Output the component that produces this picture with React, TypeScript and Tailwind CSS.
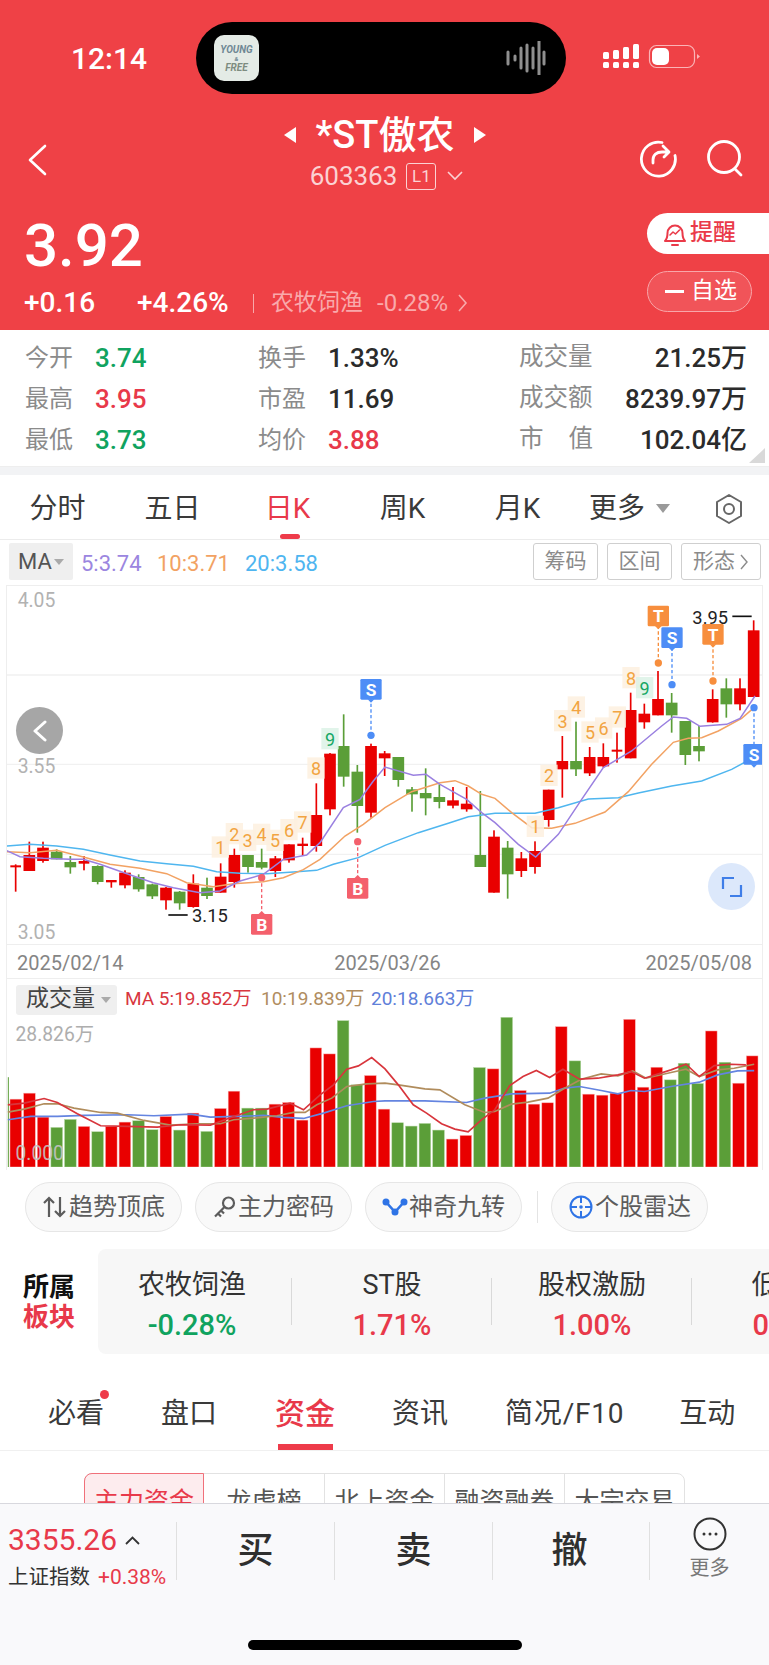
import React from "react";

// [wickTop, bodyTop, bodyBottom, wickBottom, green?]
const candles: [number, number, number, number, number][] = [
  [850, 853, 859, 932, 0], [782, 822, 870, 870, 0], [782, 800, 840, 845, 0], [805, 812, 835, 835, 1],
  [825, 843, 859, 878, 1], [825, 840, 848, 868, 0], [853, 855, 903, 910, 1], [897, 897, 904, 920, 0],
  [868, 875, 913, 922, 0], [880, 888, 925, 932, 1], [908, 910, 946, 954, 1], [918, 920, 958, 986, 0],
  [930, 932, 967, 986, 1], [880, 908, 978, 980, 0], [890, 920, 945, 954, 1], [847, 887, 935, 935, 0],
  [803, 822, 903, 920, 0], [822, 822, 858, 875, 1], [803, 843, 860, 865, 1], [825, 832, 870, 888, 0],
  [790, 790, 838, 845, 0], [770, 788, 795, 825, 0], [607, 702, 795, 812, 0], [516, 518, 685, 703, 0],
  [400, 495, 587, 617, 1], [552, 572, 675, 755, 1], [488, 495, 695, 710, 0], [510, 517, 532, 585, 0],
  [528, 528, 597, 617, 1], [618, 625, 640, 692, 1], [562, 636, 652, 703, 1], [610, 648, 663, 682, 1],
  [618, 658, 674, 682, 0], [618, 668, 685, 692, 0], [630, 822, 858, 858, 1], [748, 767, 935, 935, 0],
  [780, 800, 880, 953, 1], [813, 832, 870, 888, 0], [781, 810, 858, 878, 0], [626, 626, 717, 737, 0],
  [465, 540, 565, 650, 0], [422, 540, 565, 585, 1], [498, 528, 577, 585, 0], [487, 528, 556, 560, 0],
  [455, 506, 512, 545, 0], [335, 387, 532, 532, 0], [368, 398, 424, 443, 0], [270, 354, 403, 403, 0],
  [336, 365, 403, 455, 1], [420, 420, 522, 552, 1], [435, 495, 511, 541, 1], [325, 354, 424, 425, 0],
  [292, 322, 370, 410, 1], [292, 322, 370, 388, 0], [118, 148, 348, 348, 0],
];

const maPurple = "18,808 60,827 130,832 210,835 250,835 300,850 400,885 460,905 520,920 600,935 660,930 720,900 790,880 850,835 920,822 960,785 1030,680 1080,655 1120,600 1155,558 1240,583 1278,580 1320,610 1400,655 1445,695 1485,725 1555,790 1607,828 1675,760 1745,655 1810,560 1895,510 1985,435 2020,408 2060,412 2100,436 2180,430 2220,412 2265,345";
const maOrange = "18,812 90,815 170,808 250,828 330,850 420,862 500,878 560,905 640,917 700,908 790,902 850,890 910,866 960,835 1035,765 1090,730 1155,680 1235,632 1320,605 1365,599 1405,615 1445,640 1485,652 1535,695 1595,740 1655,742 1725,727 1815,693 1885,632 1955,550 2020,484 2065,472 2105,470 2155,450 2225,412 2262,380";
const maBlue = "18,795 90,790 170,795 250,805 330,822 420,840 500,848 580,856 650,872 720,877 800,878 880,873 950,868 1000,850 1075,830 1155,793 1255,755 1345,727 1405,707 1485,697 1605,697 1675,680 1765,654 1855,650 1915,636 2015,615 2105,600 2195,565 2260,530";

const vols: [number, number][] = [
  [388, 0], [370, 0], [442, 0], [473, 1], [449, 1], [470, 0], [486, 1], [470, 0], [457, 0], [453, 1], [480, 1],
  [440, 0], [481, 1], [430, 0], [485, 1], [416, 0], [364, 0], [415, 1], [415, 1], [403, 0], [398, 0], [451, 0],
  [234, 0], [252, 0], [152, 1], [345, 1], [317, 0], [418, 0], [459, 1], [469, 1], [461, 1], [481, 1], [508, 0],
  [497, 0], [293, 1], [297, 0], [142, 1], [362, 0], [403, 0], [399, 0], [170, 0], [273, 1], [373, 0], [376, 0],
  [370, 0], [148, 0], [352, 0], [292, 0], [330, 1], [280, 1], [341, 1], [183, 0], [277, 1], [340, 0], [258, 0],
];
const volRed = "21,405 70,400 130,386 170,398 230,432 300,468 380,470 470,472 540,465 630,466 700,440 760,420 800,418 870,400 910,420 960,375 1000,345 1040,298 1075,288 1115,263 1155,297 1195,345 1240,405 1280,430 1325,462 1365,478 1405,486 1445,450 1485,420 1530,347 1570,320 1610,302 1650,323 1690,298 1740,328 1795,325 1855,315 1895,305 1935,325 2015,300 2060,283 2100,320 2145,287 2195,283 2240,285";
const volTan = "21,427 70,418 130,402 170,402 220,415 300,428 350,430 430,452 510,466 590,462 660,462 700,450 760,445 830,438 880,428 915,428 950,405 995,385 1040,350 1100,342 1155,340 1195,345 1275,357 1320,360 1395,405 1455,428 1485,425 1535,403 1585,397 1645,385 1695,355 1745,328 1805,312 1855,318 1900,303 1940,325 2015,308 2060,298 2100,320 2155,300 2205,295 2265,283";
const volBlue = "21,450 90,440 170,440 250,437 380,435 460,438 570,433 630,442 710,440 790,437 850,443 910,446 970,430 1040,408 1120,395 1155,393 1275,393 1400,398 1455,385 1535,372 1650,370 1695,355 1740,350 1805,362 1855,372 1895,362 1935,365 2015,350 2100,337 2155,315 2215,303 2265,302";

const counts: [string, number, number][] = [
  ["1", 661, 800], ["2", 703, 760], ["3", 743, 780], ["4", 785, 762], ["5", 825, 780], ["6", 867, 748], ["7", 908, 725], ["8", 948, 563], ["9", 990, 475],
  ["1", 1606, 738], ["2", 1647, 585], ["3", 1688, 421], ["4", 1729, 380], ["5", 1770, 455], ["6", 1811, 443], ["7", 1852, 410], ["8", 1893, 292], ["9", 1934, 322],
];

// letter, x, tag centre y, dot y, colour; tag sits above the dot unless it is a B
const marks: [string, number, number, number, string][] = [
  ["S", 1113, 325, 463, "#4d8df6"],
  ["B", 1073, 922, 782, "#f4606c"],
  ["B", 785, 1030, 890, "#f4606c"],
  ["T", 1975, 105, 246, "#f78e3d"],
  ["S", 2016, 170, 311, "#4d8df6"],
  ["T", 2139, 160, 300, "#f78e3d"],
  ["S", 2262, 520, 380, "#4d8df6"],
];

const PriceChart = () => (
  <svg viewBox="21 15 2265 1074" className="block w-[755px] h-[358px]">
    {[282, 550, 820].map((y) => (
      <line key={y} x1="21" x2="2286" y1={y} y2={y} stroke="#f1f1f1" strokeWidth="4" />
    ))}
    {candles.map(([wt, bt, bb, wb, g], i) => {
      const x = 47 + 41 * i;
      const c = g ? "#5b9e38" : "#e90000";
      const thin = bb - bt < 10;
      return (
        <g key={i}>
          <rect x={x - 2.5} y={wt} width="5" height={wb - wt} fill={c} />
          <rect x={x - (thin ? 16 : 17.5)} y={bt} width={thin ? 32 : 35} height={bb - bt} fill={c} />
        </g>
      );
    })}
    <polyline points={maBlue} fill="none" stroke="#4fb6ef" strokeWidth="4.5" />
    <polyline points={maOrange} fill="none" stroke="#f2a263" strokeWidth="4.5" />
    <polyline points={maPurple} fill="none" stroke="#9a80e0" strokeWidth="4.5" />
    {counts.map(([n, x, y], i) => (
      <g key={i}>
        <rect x={x - 26} y={y - 34} width="52" height="64" fill={n === "9" ? "#dcf2e6" : "#fdf0df"} opacity="0.85" />
        <text x={x} y={y + 19} textAnchor="middle" fontSize="54" fill={n === "9" ? "#16a765" : "#f2a441"}>{n}</text>
      </g>
    ))}
    {marks.map(([l, x, y, dot, c], i) => {
      const below = l === "B";
      return (
        <g key={i}>
          <line x1={x} x2={x} y1={dot} y2={y} stroke={c} strokeWidth="4" strokeDasharray="10 7" />
          <circle cx={x} cy={dot} r="11" fill={c} />
          <rect x={x - 32} y={y - 31} width="64" height="62" rx="4" fill={c} />
          <polygon points={below ? `${x - 10},${y - 30} ${x},${y - 40} ${x + 10},${y - 30}` : `${x - 10},${y + 30} ${x},${y + 40} ${x + 10},${y + 30}`} fill={c} />
          <text x={x} y={y + 19} textAnchor="middle" fontSize="52" fontWeight="700" fill="#fff">{l}</text>
        </g>
      );
    })}
    <line x1="505" x2="563" y1="1002" y2="1002" stroke="#111" strokeWidth="5" />
    <text x="576" y="1022" fontSize="55" fill="#222">3.15</text>
    <text x="2077" y="130" fontSize="55" fill="#222">3.95</text>
    <line x1="2197" x2="2255" y1="106" y2="106" stroke="#111" strokeWidth="5" />
    <text x="53" y="78" fontSize="58" fill="#b2b2b2">4.05</text>
    <text x="53" y="576" fontSize="58" fill="#b2b2b2">3.55</text>
    <text x="53" y="1075" fontSize="58" fill="#b2b2b2">3.05</text>
  </svg>
);

const VolumeChart = () => (
  <svg viewBox="21 141 2265 451" className="block w-[755px] h-[150px]">
    <rect x="21" y="322" width="3" height="270" fill="#5b9e38" />
    {vols.map(([top, g], i) => (
      <rect key={i} x={27.5 + 41 * i} y={top} width="35" height={592 - top} fill={g ? "#5b9e38" : "#e90000"} stroke={g ? "#b5d6a3" : "#f9b0b0"} strokeWidth="1.5" />
    ))}
    <polyline points={volBlue} fill="none" stroke="#6484e0" strokeWidth="5" />
    <polyline points={volTan} fill="none" stroke="#b08c5c" strokeWidth="5" />
    <polyline points={volRed} fill="none" stroke="#d8353c" strokeWidth="5" />
    <text x="44" y="213" fontSize="58" fill="#aeaeae">28.826万</text>
    <text x="44" y="570" fontSize="58" fill="#c4c4c4" opacity="0.9">0.000</text>
  </svg>
);

const Stat = ({ label, value, color, w }: { label: string; value: string; color?: string; w: string }) => (
  <div className="flex items-center h-[41px]">
    <span className={`${w} text-[24px] leading-none text-[#8b8b8b]`}>{label}</span>
    <span className={`text-[26px] leading-none font-medium ${color ?? "text-[#2b2b2b]"}`}>{value}</span>
  </div>
);

const StatRight = ({ label, value }: { label: string; value: string }) => (
  <div className="flex items-center justify-between h-[41px] w-[228px]">
    <span className="w-[74px] flex justify-between text-[24.5px] leading-none text-[#8b8b8b]">
      {label.split(" ").map((t) => <span key={t}>{t}</span>)}
    </span>
    <span className="text-[26px] leading-none font-medium text-[#2b2b2b]">{value}</span>
  </div>
);

const Pill = ({ icon, label }: { icon: React.ReactNode; label: string }) => (
  <div className="w-[157px] h-[50px] shrink-0 flex items-center justify-center gap-[1px] rounded-full border border-[#e6e6e6] bg-[#f9f9f9] text-[24px] text-[#5c5c5c]">
    {icon}
    <span>{label}</span>
  </div>
);

const Sector = ({ name, value, green }: { name: string; value: string; green?: boolean }) => (
  <div className="w-[200px] shrink-0 flex flex-col items-center pt-[2px]">
    <span className="text-[27px] leading-[35px] text-[#333]">{name}</span>
    <span className={`mt-[5px] text-[29px] leading-[35px] font-medium ${green ? "text-[#10a35f]" : "text-[#e8394a]"}`}>{value}</span>
  </div>
);

export default function App() {
  return (
    <div className="w-[769px] h-[1665px] flex flex-col overflow-hidden bg-white font-[Roboto,'Noto_Sans_CJK_SC',sans-serif]">
      {/* Red header */}
      <header className="h-[330px] shrink-0 bg-[#ef4146] text-white">
        <div className="h-[94px] pt-[22px] flex items-start">
          <div className="w-[196px] pl-[71px] pt-[20px] text-[30px] leading-[34px] font-medium">12:14</div>
          <div className="w-[370px] h-[72px] rounded-full bg-black flex items-center justify-between pl-[18px] pr-[20px]">
            <div className="w-[45px] h-[46px] rounded-[10px] bg-[#e4ebe6] flex flex-col items-center justify-center italic font-bold text-[#6f8894] leading-[11px]">
              <span className="text-[10px]">YOUNG</span>
              <span className="text-[6px] leading-[7px]">&amp;</span>
              <span className="text-[10px] text-[#7d8c80]">FREE</span>
            </div>
            <svg width="40" height="34" viewBox="0 0 40 34" stroke="#8f8f8f" strokeWidth="3" strokeLinecap="round">
              <path d="M2 11v12M9 15v4M15 7v20M21 4v26M27 7v20M33 0v34M38 11v12" />
            </svg>
          </div>
          <svg width="134" height="26" viewBox="0 0 134 26" className="ml-[37px] mt-[22px]" fill="#fff">
            <rect x="0" y="18" width="6" height="6" rx="1.5" /><rect x="10" y="18" width="6" height="6" rx="1.5" /><rect x="20" y="18" width="6" height="6" rx="1.5" /><rect x="30" y="18" width="6" height="6" rx="1.5" />
            <rect x="0" y="8" width="6" height="7" rx="1.5" /><rect x="10" y="6" width="6" height="9" rx="1.5" /><rect x="20" y="3" width="6" height="12" rx="1.5" /><rect x="30" y="0" width="6" height="15" rx="1.5" />
            <rect x="46.500" y="1.500" width="45" height="22" rx="7" fill="none" stroke="#fbb4b6" strokeWidth="1.2" />
            <rect x="49" y="4" width="17" height="17" rx="5" />
            <path d="M94 10l3 2.500-3 2.500z" fill="#fbb4b6" />
          </svg>
        </div>

        <div className="h-[102px] flex">
          <div className="w-[282px] pl-[27px] pt-[50px]">
            <svg width="20" height="32" viewBox="0 0 20 32" fill="none" stroke="#fff" strokeWidth="2.6" strokeLinecap="round" strokeLinejoin="round"><path d="M18 2 3 16l15 14" /></svg>
          </div>
          <div className="w-[206px] flex flex-col items-center pt-[20px]">
            <div className="flex items-center">
              <span className="w-0 h-0 border-y-[8px] border-y-transparent border-r-[12px] border-r-white" />
              <span className="mx-[19px] text-[38px] leading-[42px] font-medium whitespace-nowrap">*ST傲农</span>
              <span className="w-0 h-0 border-y-[8px] border-y-transparent border-l-[12px] border-l-white" />
            </div>
            <div className="mt-[6px] pl-[3px] flex items-center text-[#fbd2d3] whitespace-nowrap">
              <span className="text-[26px] leading-[28px]">603363</span>
              <span className="ml-[9px] w-[30px] h-[27px] rounded-[3px] border border-[#fbd2d3] text-[17px] leading-[25px] text-center">L1</span>
              <svg width="16" height="10" viewBox="0 0 16 10" fill="none" stroke="#fbd2d3" strokeWidth="1.6" className="ml-[11px]"><path d="m1 1 7 7 7-7" /></svg>
            </div>
          </div>
          <div className="flex-1 flex items-start pl-[150px] pt-[45px] gap-[29px]">
            <svg width="40" height="40" viewBox="0 0 40 40" fill="none" stroke="#fff" strokeWidth="2.8" strokeLinecap="round" strokeLinejoin="round" className="shrink-0">
              <path d="M24 3.500a17 17 0 1 0 13 13" />
              <path d="M15 24v-3c0-5 3.500-8 9-8h6M25 7l6 6-5 5" />
            </svg>
            <svg width="38" height="40" viewBox="0 0 38 40" fill="none" stroke="#fff" strokeWidth="2.8" strokeLinecap="round" className="shrink-0">
              <circle cx="17" cy="18" r="15.500" />
              <path d="m28 30 6 6" />
            </svg>
          </div>
        </div>

        <div className="flex justify-between">
          <div className="pl-[24px] pt-[20px]">
            <div className="text-[60px] leading-[60px] font-medium">3.92</div>
            <div className="mt-[12px] flex items-center text-[28px] leading-[30px] font-medium">
              <span className="w-[113px]">+0.16</span>
              <span className="w-[116px]">+4.26%</span>
              <span className="w-px h-[19px] bg-[#f8a8aa]" />
              <span className="ml-[17px] text-[23px] font-normal text-[#f9a9ab]">农牧饲渔</span>
              <span className="ml-[14px] text-[24px] font-normal text-[#f9a9ab]">-0.28%</span>
              <svg width="10" height="20" viewBox="0 0 10 20" fill="none" stroke="#f9a9ab" strokeWidth="1.6" className="ml-[10px]"><path d="m1 2 7 8-7 8" /></svg>
            </div>
          </div>
          <div className="w-[122px] pt-[17px] flex flex-col gap-[17px]">
            <div className="h-[41px] rounded-l-full bg-white flex items-center pl-[16px] gap-[3px] text-[#ea3a49] text-[23px] font-medium">
              <svg width="24" height="26" viewBox="0 0 24 26" fill="none" stroke="#ea3a49" strokeWidth="2" strokeLinejoin="round" strokeLinecap="round">
                <path d="M2 20c2-2 2.500-4 2.500-8a7.500 7.500 0 0 1 15 0c0 4 .5 6 2.500 8zM9 24h6" />
                <path d="m7 14 3-3 2.500 2 4-4" strokeWidth="1.600" />
              </svg>
              <span>提醒</span>
            </div>
            <div className="w-[105px] h-[41px] rounded-full border border-[#f8a6a9] bg-white/10 flex items-center pl-[17px] gap-[7px] text-[23px]">
              <span className="w-[19px] h-[2.500px] bg-white" />
              <span>自选</span>
            </div>
          </div>
        </div>
      </header>

      {/* Quote stats */}
      <section className="relative h-[137px] shrink-0 pl-[25px] pt-[7px] grid grid-cols-[233px_261px_228px] border-b border-[#eeeeee]">
        <div>
          <Stat label="今开" value="3.74" color="text-[#10a35f]" w="w-[70px]" />
          <Stat label="最高" value="3.95" color="text-[#e8394a]" w="w-[70px]" />
          <Stat label="最低" value="3.73" color="text-[#10a35f]" w="w-[70px]" />
        </div>
        <div>
          <Stat label="换手" value="1.33%" w="w-[70px]" />
          <Stat label="市盈" value="11.69" w="w-[70px]" />
          <Stat label="均价" value="3.88" color="text-[#e8394a]" w="w-[70px]" />
        </div>
        <div>
          <StatRight label="成交量" value="21.25万" />
          <StatRight label="成交额" value="8239.97万" />
          <StatRight label="市 值" value="102.04亿" />
        </div>
        <span className="absolute right-[4px] bottom-[3px] w-[16px] h-[15px] bg-[#d9d9d9] [clip-path:polygon(100%_0,100%_100%,0_100%)]" />
      </section>
      <div className="h-[8px] shrink-0 bg-[#f2f3f5]" />

      {/* Period tabs */}
      <nav className="h-[65px] shrink-0 flex items-center pt-[3px] border-b border-[#ececec] text-[28px] text-[#3a3a3a]">
        <span className="w-[115px] text-center">分时</span>
        <span className="w-[115px] text-center">五日</span>
        <span className="relative w-[115px] self-stretch flex items-center justify-center text-[#e8394a]">
          日K
          <span className="absolute left-[50px] bottom-0 w-[20px] h-[5px] rounded-full bg-[#ee3b4a]" />
        </span>
        <span className="w-[115px] text-center">周K</span>
        <span className="w-[115px] text-center">月K</span>
        <span className="ml-[14px]">更多</span>
        <span className="ml-[11px] w-0 h-0 border-x-[7px] border-x-transparent border-t-[9px] border-t-[#9a9a9a]" />
        <svg width="30" height="32" viewBox="0 0 30 32" fill="none" stroke="#666" strokeWidth="2" className="ml-[44px]">
          <path d="M15 2 27 9v14l-12 7-12-7V9z" strokeLinejoin="round" />
          <circle cx="15" cy="16" r="5" />
        </svg>
      </nav>

      {/* MA legend row */}
      <div className="h-[45px] shrink-0 flex items-start pl-[9px] pt-[3px] text-[22px] leading-[41px]">
        <div className="w-[64px] h-[37px] rounded-[2px] bg-[#efefef] flex items-center pl-[9px] text-[#555]">
          MA
          <span className="ml-[2px] w-0 h-0 border-x-[5px] border-x-transparent border-t-[6px] border-t-[#aaa]" />
        </div>
        <span className="ml-[8px] w-[76px] text-[#9b86e0]">5:3.74</span>
        <span className="w-[88px] text-[#f2a263]">10:3.71</span>
        <span className="text-[#4fb5f0]">20:3.58</span>
        <div className="ml-auto mr-[8px] flex gap-[9px] text-[21px] text-[#8b8b8b]">
          <span className="w-[65px] h-[37px] rounded-[3px] border border-[#cfcfcf] text-center leading-[35px]">筹码</span>
          <span className="w-[65px] h-[37px] rounded-[3px] border border-[#cfcfcf] text-center leading-[35px]">区间</span>
          <span className="w-[80px] h-[37px] rounded-[3px] border border-[#cfcfcf] flex items-center justify-center gap-[5px]">
            形态
            <svg width="9" height="18" viewBox="0 0 9 18" fill="none" stroke="#8b8b8b" strokeWidth="1.4"><path d="m1 2 6 7-6 7" /></svg>
          </span>
        </div>
      </div>

      {/* Charts */}
      <section className="relative ml-[6px] w-[757px] h-[585px] shrink-0 border-x border-t border-[#eeeeee]">
        <PriceChart />
        <div className="h-[35px] pt-[2px] border-y border-[#eeeeee] flex justify-between px-[10px] text-[20px] leading-[33px] text-[#858585]">
          <span>2025/02/14</span>
          <span className="ml-[6px]">2025/03/26</span>
          <span>2025/05/08</span>
        </div>
        <div className="h-[38px] pt-[3px] pl-[9px] flex items-center">
          <div className="w-[101px] h-[30px] rounded-[3px] bg-[#efefef] flex items-center pl-[10px] text-[23px] text-[#444]">
            成交量
            <span className="ml-[6px] w-0 h-0 border-x-[5px] border-x-transparent border-t-[6px] border-t-[#aaa]" />
          </div>
          <span className="ml-[8px] w-[136px] text-[19px] text-[#d8373f]">MA 5:19.852万</span>
          <span className="w-[110px] text-[19px] text-[#b08d5f]">10:19.839万</span>
          <span className="text-[19px] text-[#5f80d9]">20:18.663万</span>
        </div>
        <VolumeChart />
        {/* floating buttons over the chart */}
        <div className="absolute left-[9px] top-[121px] w-[47px] h-[47px] rounded-full bg-[#a6a6a6] flex items-center justify-center">
          <svg width="16" height="22" viewBox="0 0 16 22" fill="none" stroke="#fff" strokeWidth="3" strokeLinecap="round" strokeLinejoin="round"><path d="M13 2 3 11l10 9" /></svg>
        </div>
        <div className="absolute left-[701px] top-[277px] w-[47px] h-[47px] rounded-full bg-[#dce8fb] flex items-center justify-center">
          <svg width="22" height="22" viewBox="0 0 22 22" fill="none" stroke="#3f7ee8" strokeWidth="2.2"><path d="M13 2H2v11M9 20h11V9" /></svg>
        </div>
      </section>

      {/* Quick tools */}
      <div className="mt-[12px] shrink-0 flex items-center pl-[25px] gap-[13px]">
        <Pill label="趋势顶底" icon={
          <svg width="26" height="24" viewBox="0 0 26 24" fill="none" stroke="#5c5c5c" strokeWidth="2.2"><path d="M7 22V3M2 8l5-5 5 5M18 2v19M13 16l5 5 5-5" /></svg>
        } />
        <Pill label="主力密码" icon={
          <svg width="24" height="24" viewBox="0 0 24 24" fill="none" stroke="#5c5c5c" strokeWidth="2.2"><circle cx="15.500" cy="8" r="5.500" /><path d="M11.500 12 2 21.500M5 18.500l3 3M8 15.500l3 3" /></svg>
        } />
        <Pill label="神奇九转" icon={
          <svg width="26" height="20" viewBox="0 0 26 20" fill="none" stroke="#2f74e6" strokeWidth="2.6"><path d="m4 5 9 10 9-10" /><g fill="#2f74e6" stroke="none"><circle cx="4" cy="5" r="3.500" /><circle cx="13" cy="15" r="3.500" /><circle cx="22" cy="5" r="3.500" /></g></svg>
        } />
        <span className="ml-[2px] w-px h-[32px] bg-[#e4e4e4]" />
        <Pill label="个股雷达" icon={
          <svg width="26" height="26" viewBox="0 0 26 26" fill="none" stroke="#2f74e6" strokeWidth="2"><circle cx="13" cy="13" r="10.500" /><path d="M13 2v7M13 17v7M2 13h7M17 13h7" /><circle cx="13" cy="13" r="1.800" fill="#2f74e6" stroke="none" /></svg>
        } />
      </div>

      {/* Sectors */}
      <div className="mt-[17px] h-[105px] shrink-0 flex items-center">
        <div className="w-[98px] shrink-0 pl-[23px] text-[26px] leading-[30px] font-bold">
          <div className="text-[#111]">所属</div>
          <div className="text-[#e8394a]">板块</div>
        </div>
        <div className="flex-1 h-full rounded-l-[8px] bg-[#f7f7f7] overflow-hidden">
          <div className="-ml-[6px] flex pt-[17px]">
            <Sector name="农牧饲渔" value="-0.28%" green />
            <span className="w-px h-[47px] mt-[12px] -ml-px shrink-0 bg-[#d9d9d9]" />
            <Sector name="ST股" value="1.71%" />
            <span className="w-px h-[47px] mt-[12px] -ml-px shrink-0 bg-[#d9d9d9]" />
            <Sector name="股权激励" value="1.00%" />
            <span className="w-px h-[47px] mt-[12px] -ml-px shrink-0 bg-[#d9d9d9]" />
            <Sector name="低价股" value="0.85%" />
          </div>
        </div>
      </div>

      {/* Detail tabs */}
      <nav className="mt-[34px] h-[63px] shrink-0 relative border-b border-[#f0f0f0] text-[28px] leading-[36px] text-[#3a3a3a]">
        <div className="flex items-start pt-[8px]">
          <span className="relative ml-[48px]">
            必看
            <span className="absolute -right-[5px] -top-[6px] w-[9px] h-[9px] rounded-full bg-[#ee3b4a]" />
          </span>
          <span className="ml-[57px]">盘口</span>
          <span className="ml-[58px] text-[30px] text-[#e8394a] font-medium">资金</span>
          <span className="ml-[57px]">资讯</span>
          <span className="ml-[57px] tracking-[0.8px]">简况/F10</span>
          <span className="ml-[55px]">互动</span>
        </div>
        <span className="absolute left-[278px] bottom-0 w-[55px] h-[6px] bg-[#ee3b4a]" />
      </nav>

      {/* Fund tabs, cut off by the bottom bar */}
      <div className="flex-1 min-h-0 overflow-hidden pt-[22px] pl-[84px]">
        <div className="w-[601px] h-[60px] flex rounded-t-[8px] border border-[#e2e2e2] text-[25px] leading-[56px] text-[#555] text-center">
          <span className="w-[120px] -m-px mr-0 h-[60px] rounded-tl-[8px] border border-[#f0707a] bg-[#fdecee] text-[#e8394a]">主力资金</span>
          <span className="w-[121px] border-r border-[#e2e2e2]">龙虎榜</span>
          <span className="w-[120px] border-r border-[#e2e2e2]">北上资金</span>
          <span className="w-[120px] border-r border-[#e2e2e2]">融资融券</span>
          <span className="flex-1">大宗交易</span>
        </div>
      </div>

      {/* Bottom trade bar */}
      <footer className="h-[162px] shrink-0 bg-[#f9f9fb] border-t border-[#d8d8de]">
        <div className="flex items-start pt-[18px]">
          <div className="w-[177px] h-[58px] pl-[8px] border-r border-[#e0e0e0]">
            <div className="flex items-center h-[36px]">
              <span className="text-[30px] leading-[32px] text-[#e8394a]">3355.26</span>
              <svg width="15" height="9" viewBox="0 0 15 9" fill="none" stroke="#333" strokeWidth="1.8" className="ml-[8px]"><path d="m1 8 6.500-6.500L14 8" /></svg>
            </div>
            <div className="mt-[6px] flex items-center leading-[26px] whitespace-nowrap">
              <span className="text-[20.5px] text-[#333]">上证指数</span>
              <span className="ml-[8px] text-[21px] text-[#e8394a]">+0.38%</span>
            </div>
          </div>
          <div className="w-[158px] h-[58px] border-r border-[#e0e0e0] flex items-center justify-center text-[36px] font-medium text-[#2f2f2f]">买</div>
          <div className="w-[158px] h-[58px] border-r border-[#e0e0e0] flex items-center justify-center text-[36px] font-medium text-[#2f2f2f]">卖</div>
          <div className="w-[157px] h-[58px] border-r border-[#e0e0e0] flex items-center justify-center pr-[3px] text-[36px] font-medium text-[#2f2f2f]">撤</div>
          <div className="flex-1 -mt-[5px] flex flex-col items-center">
            <svg width="34" height="34" viewBox="0 0 34 34" fill="none" stroke="#333" strokeWidth="2"><circle cx="17" cy="17" r="15.500" /><g fill="#333" stroke="none"><circle cx="11" cy="17" r="1.500" /><circle cx="17" cy="17" r="1.500" /><circle cx="23" cy="17" r="1.500" /></g></svg>
            <span className="mt-[4px] text-[20px] leading-[26px] text-[#777]">更多</span>
          </div>
        </div>
        <div className="mt-[59px] mx-auto w-[274px] h-[10px] rounded-full bg-black" />
      </footer>
    </div>
  );
}
